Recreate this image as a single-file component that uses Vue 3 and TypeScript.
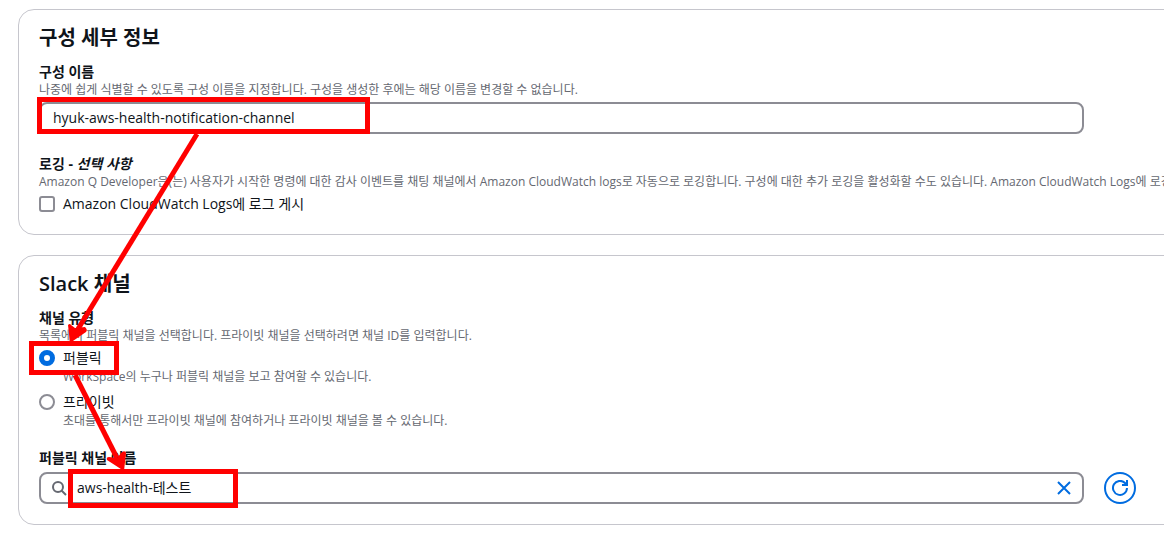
<script setup lang="ts">
import { ref } from 'vue'

const configName = ref('hyuk-aws-health-notification-channel')
const publishLogs = ref(false)
const channelType = ref('public')
const channelName = ref('aws-health-테스트')

const channelTypes = [
  { value: 'public', label: '퍼블릭', hint: 'WorkSpace의 누구나 퍼블릭 채널을 보고 참여할 수 있습니다.' },
  { value: 'private', label: '프라이빗', hint: '초대를 통해서만 프라이빗 채널에 참여하거나 프라이빗 채널을 볼 수 있습니다.' },
]
</script>

<template>
  <main class="page">
    <section class="card">
      <h2>구성 세부 정보</h2>
      <div class="field">
        <label class="title" for="config-name">구성 이름</label>
        <p class="hint">나중에 쉽게 식별할 수 있도록 구성 이름을 지정합니다. 구성을 생성한 후에는 해당 이름을 변경할 수 없습니다.</p>
        <div class="box">
          <input id="config-name" v-model="configName" type="text" />
        </div>
      </div>
      <div class="field logging">
        <h3 class="title">로깅 - <em>선택 사항</em></h3>
        <p class="hint">Amazon Q Developer은(는) 사용자가 시작한 명령에 대한 감사 이벤트를 채팅 채널에서 Amazon CloudWatch logs로 자동으로 로깅합니다. 구성에 대한 추가 로깅을 활성화할 수도 있습니다. Amazon CloudWatch Logs에 로깅</p>
        <label class="option">
          <input v-model="publishLogs" type="checkbox" />
          <span>Amazon CloudWatch Logs에 로그 게시</span>
        </label>
      </div>
    </section>

    <section class="card">
      <h2>Slack 채널</h2>
      <fieldset class="field">
        <legend class="title">채널 유형</legend>
        <p class="hint">목록에서 퍼블릭 채널을 선택합니다. 프라이빗 채널을 선택하려면 채널 ID를 입력합니다.</p>
        <div v-for="type in channelTypes" :key="type.value" class="choice">
          <label class="option">
            <input v-model="channelType" type="radio" name="channel-type" :value="type.value" />
            <span>{{ type.label }}</span>
          </label>
          <p class="hint">{{ type.hint }}</p>
        </div>
      </fieldset>
      <div class="field channel">
        <label class="title" for="channel-name">퍼블릭 채널 이름</label>
        <div class="row">
          <div class="box search-box">
            <svg class="icon search" viewBox="0 0 16 16" aria-hidden="true">
              <circle cx="7" cy="7" r="5" />
              <path d="M10.5 10.5 15 15" />
            </svg>
            <input id="channel-name" v-model="channelName" type="text" />
            <button class="clear" type="button" aria-label="지우기" @click="channelName = ''">
              <svg class="icon" viewBox="0 0 16 16" aria-hidden="true"><path d="m2 2 12 12M14 2 2 14" /></svg>
            </button>
          </div>
          <button class="refresh" type="button" aria-label="새로 고침">
            <svg class="icon" viewBox="0 0 16 16" aria-hidden="true">
              <path d="M15 8a7 7 0 1 1-2-5l2 2" />
              <path d="M15 0v5h-5" />
            </svg>
          </button>
        </div>
      </div>
    </section>

    <svg class="marks" width="400" height="533" viewBox="0 0 400 533" aria-hidden="true">
      <rect x="39.5" y="99.5" width="328" height="32" />
      <rect x="31.5" y="343.5" width="85" height="29" />
      <rect x="70.5" y="471.5" width="165" height="34" />
      <path d="M197 134 78 329" />
      <path d="m75 375 42 83" />
      <path class="head" d="M68 325q2-2 3 0l4 3 10-1q3 3 1 5l-16 11Z" />
      <path class="head" d="M107 460q-1-3 2-3l8 1 5-6q3-2 4 1l-2 18Z" />
    </svg>
  </main>
</template>

<style>
body {
  margin: 0;
  background: #fff;
}
</style>

<style scoped>
.page {
  position: relative;
  overflow: hidden;
  padding: 9px 0 8px 18px;
  color: #0f141a;
  font: 14px/20px "Open Sans", "Noto Sans CJK KR", sans-serif;
}
.card {
  box-sizing: border-box;
  margin: 0 -20px 20px 0;
  padding: 16px 99px 20px 20px;
  border: 1px solid #c6c6cd;
  border-radius: 16px;
}
.card:last-of-type {
  margin-bottom: 0;
}
h2,
h3,
p {
  margin: 0;
}
h2 {
  font-size: 20px;
  line-height: 24px;
  font-weight: 600;
}
.field {
  min-width: 0;
  margin: 12px 0 0;
  padding: 0;
  border: 0;
}
.title {
  display: block;
  padding: 0;
  font-size: 14px;
  line-height: 20px;
  font-weight: 700;
}
.hint {
  color: #656871;
  font-size: 12px;
  line-height: 16px;
  white-space: nowrap;
}
.box {
  box-sizing: border-box;
  display: flex;
  flex: 1;
  align-items: center;
  gap: 10px;
  height: 32px;
  margin-top: 4px;
  padding: 0 12px;
  border: 2px solid #8c8c94;
  border-radius: 8px;
}
.search-box {
  padding: 0 10px;
}
.box input {
  flex: 1;
  min-width: 0;
  padding: 0;
  border: 0;
  outline: 0;
  background: none;
  color: inherit;
  font: inherit;
}
.logging {
  margin-top: 20px;
}
.option {
  display: flex;
  align-items: center;
  gap: 8px;
  margin-top: 4px;
}
.option input {
  appearance: none;
  box-sizing: border-box;
  width: 16px;
  height: 16px;
  margin: 0;
  border: 2px solid #8c8c94;
  border-radius: 3px;
}
.option input[type="radio"] {
  border-radius: 50%;
}
.option input[type="radio"]:checked {
  border: 5px solid #006ce0;
}
.choice .hint {
  margin-left: 24px;
  line-height: 18px;
}
.choice + .choice {
  margin-top: 6px;
}
.channel {
  margin-top: 18px;
}
.row {
  display: flex;
  align-items: center;
  gap: 20px;
  margin-right: -52px;
}
.icon {
  display: block;
  width: 16px;
  height: 16px;
  fill: none;
  stroke: #006ce0;
  stroke-width: 2;
}
.search {
  stroke: #656871;
}
button {
  padding: 0;
  background: none;
  cursor: pointer;
}
.clear {
  border: 0;
}
.refresh {
  box-sizing: border-box;
  display: grid;
  place-items: center;
  width: 32px;
  height: 32px;
  margin-top: 4px;
  border: 2px solid #006ce0;
  border-radius: 50%;
}
.marks {
  position: absolute;
  top: 0;
  left: 0;
  fill: none;
  stroke: #f00;
  stroke-width: 5;
  pointer-events: none;
}
.head {
  fill: #f00;
  stroke: none;
}
</style>
